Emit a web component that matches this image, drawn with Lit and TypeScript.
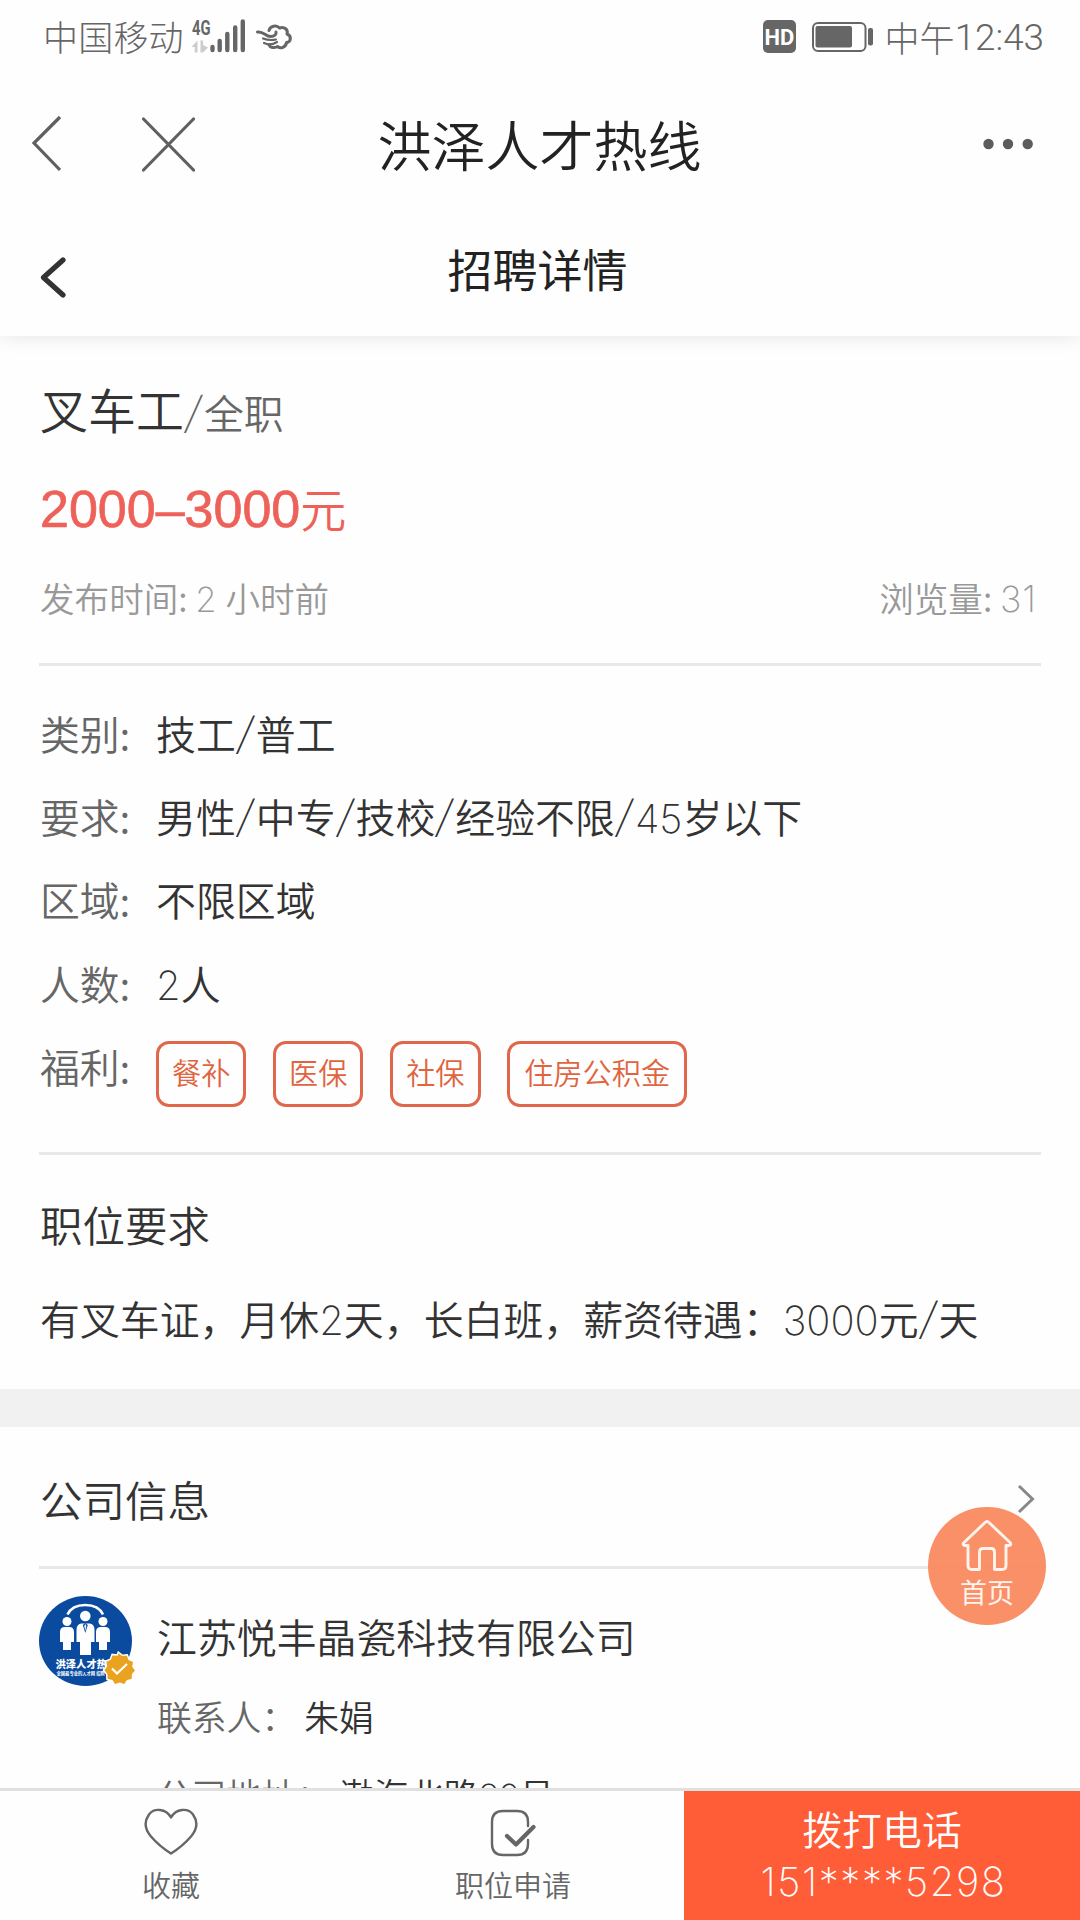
import { LitElement, html, css, svg } from "lit";
import { customElement } from "lit/decorators.js";

interface Field { label: string; value: unknown; }

const num = (t: string) => html`<span class="num">${t}</span>`;
const slash = html`<span class="slash">/</span>`;

const fields: Field[] = [
  { label: "类别:", value: html`技工${slash}普工` },
  { label: "要求:", value: html`男性${slash}中专${slash}技校${slash}经验不限${slash}${num("45")}岁以下` },
  { label: "区域:", value: "不限区域" },
  { label: "人数:", value: html`${num("2")}人` },
];
const benefits = ["餐补", "医保", "社保", "住房公积金"];
const signal = [[212.5, 46], [219.7, 40], [227.3, 33], [235.2, 26.5], [242.8, 20.5]];

@customElement("app-root")
export class AppRoot extends LitElement {
  static styles = css`
    :host { display: block; }
    * { box-sizing: border-box; }
    svg { display: block; flex: none; }
    .screen {
      width: 1080px; height: 1920px; overflow: hidden; position: relative;
      display: flex; flex-direction: column; background: #fefefe; color: #333;
      font-family: "Noto Sans CJK SC", sans-serif; font-weight: 350; font-size: 39.9px;
      white-space: nowrap;
    }
    .status { height: 70px; flex: none; display: flex; align-items: center; color: #666; font-size: 35px; line-height: 70px; font-weight: 300; padding: 0 36px 0 43px; }
    .status .carrier { width: 147px; letter-spacing: 0.2px; padding-top: 2px; }
    .status .spacer { flex: 1; }
    .status .time { display: flex; align-items: center; height: 70px; margin-left: 11px; padding-top: 3px; }
    .status .clock { font-family: Roboto, sans-serif; font-size: 36.8px; font-weight: 350; padding-top: 2px; }
    .titlebar { height: 146px; flex: none; display: flex; align-items: center; justify-content: space-between; background: #fefefe; position: relative; z-index: 1; }
    .titlebar .name { font-size: 54px; line-height: 80px; color: #222; padding: 2px 1px 0 0; }
    .subbar { position: relative; height: 120px; flex: none; display: flex; align-items: center; justify-content: space-between; box-shadow: 0 2px 18px rgba(0, 0, 0, 0.09); background: #fefefe; }
    .subbar .name { font-size: 45px; line-height: 70px; color: #222; padding: 0 5px 15px 0; font-weight: 370; }
    .side { width: 220px; }
    .main { flex: 1; min-height: 0; overflow: hidden; }
    .job { padding: 32px 39px 17px; }
    .job-title { height: 80px; line-height: 80px; font-size: 48px; padding-left: 1px; }
    .job-title .type { font-size: 39.8px; color: #666; }
    .salary { height: 122px; line-height: 123px; font-size: 52px; color: #ee6159; font-family: "Liberation Sans", sans-serif; padding-left: 1px; -webkit-text-stroke: 0.7px #ee6159; }
    .salary .unit { font-family: "Noto Sans CJK SC", sans-serif; font-size: 46px; line-height: 1; -webkit-text-stroke: 0; }
    .meta { height: 54px; line-height: 54px; font-size: 34.6px; color: #999; display: flex; justify-content: space-between; padding: 0 4px 0 1px; font-weight: 330; }
    .rule { height: 3px; background: #e8e8e8; }
    .meta + .rule { margin-top: 39px; }
    .fields { padding: 25px 1px 45px; }
    .field { display: flex; height: 83.2px; line-height: 83.2px; }
    .label { width: 116px; color: #666; letter-spacing: -0.2px; }
    .num { font-family: Inter, "Liberation Sans", sans-serif; font-weight: 200; line-height: 1; }
    .meta .num { letter-spacing: 1px; font-weight: 250; }
    .meta > :last-child .num { font-size: 36px; }
    .slash { display: inline-block; width: 20px; text-align: center; font-weight: 250; line-height: 1; transform: translateY(-3px) skewX(-6deg); }
    .tags { display: flex; gap: 26.7px; align-items: flex-end; }
    .tag { height: 66px; line-height: 54px; border: 3px solid #e0674c; border-radius: 13px; color: #e0653f; font-size: 29.2px; padding: 0 13px; }
    .tag:last-child { padding: 0 14px; }
    .h2 { font-size: 42.5px; line-height: 80px; padding-left: 1px; }
    .rule + .h2 { margin-top: 29px; }
    .desc { line-height: 108px; height: 108px; padding-left: 1px; font-size: 39.9px; }
    .band { height: 38px; background: #f1f1f1; }
    .company { padding: 0 39px; }
    .company-head { height: 142px; padding-top: 6px; border-bottom: 3px solid #e8e8e8; display: flex; align-items: center; justify-content: space-between; }
    .company-body { display: flex; padding-top: 27px; gap: 18px; }
    .company-name { line-height: 80px; height: 80px; }
    .row { display: flex; gap: 8px; font-size: 34.8px; height: 78.5px; line-height: 80px; }
    .row .key { color: #666; }
    .bottom { height: 132px; flex: none; display: flex; border-top: 3px solid #e0e0e0; background: #fefefe; position: relative; }
    .action { width: 342px; color: #666; font-size: 29px; display: flex; flex-direction: column; align-items: center; line-height: 44px; padding-top: 14px; }
    .action svg { margin-bottom: 5px; }
    .call { flex: 1; background: #ff5c38; color: #fff; text-align: center; padding-top: 8px; }
    .call .t { line-height: 58px; height: 58px; }
    .call .p { font-family: Inter, sans-serif; font-weight: 200; line-height: 50px; letter-spacing: 1.6px; padding-left: 3px; }
    .fab { position: absolute; left: 928px; top: 1507px; width: 118px; height: 118px; border-radius: 50%; background: rgba(249, 136, 92, 0.93); color: #fff3ed; display: flex; flex-direction: column; align-items: center; padding-top: 11px; font-size: 27px; line-height: 40px; font-weight: 400; }
  `;

  render() {
    return html`
      <div class="screen">
        <div class="status">
          <span class="carrier">中国移动</span>
          <svg width="110" height="70" viewBox="190 0 110 70" fill="#666">
            <text x="192" y="34.500" font-family="Roboto" font-weight="700" font-size="20.5" textLength="18.500" lengthAdjust="spacingAndGlyphs">4G</text>
            <path d="M191.500 47l6-6.500v12h-2.800v-5.500zM200.500 40.500h2.500v4.500l5 2.500-5 5h-2.500z" fill="#ccc" />
            ${signal.map(([x, y]) => svg`<path d="M${x} ${y + 1}V50" stroke="#666" stroke-width="4.4" stroke-linecap="round" />`)}
            <g fill="none" stroke="#666" stroke-width="3" stroke-linecap="round" stroke-linejoin="round">
              <path d="M257.500 32c6-1 8 4.500 13 4.500 4.500 0 6-2.500 5.500-4.500" />
              <path d="M263 38.500c4 1.500 8 2 13 1" stroke-width="2.200" />
              <path d="M264 43c4 2 9 1.500 13-1" stroke-width="2.200" />
              <path d="M269 30.500c1-4.500 7.500-6 10.500-2.500 5-2 9 2 7.500 6 5 2 4 8-.5 8.500-.5 5-6 6.500-9 4-3.500 2-7.500 1-8.500-1.500" />
            </g>
          </svg>
          <span class="spacer"></span>
          <svg width="112" height="70" viewBox="762 0 112 70">
            <rect x="763" y="20" width="33" height="33" rx="5" fill="#666" />
            <text x="779.5" y="44.5" text-anchor="middle" font-family="Roboto" font-weight="700" font-size="22" fill="#fff">HD</text>
            <rect x="813" y="23" width="52.500" height="28" rx="5" fill="none" stroke="#666" stroke-width="2" />
            <rect x="815.500" y="26" width="36.500" height="21.500" rx="2" fill="#666" />
            <rect x="868" y="28" width="5" height="17.500" rx="2" fill="#666" />
          </svg>
          <span class="time"><span>中午</span><span class="clock">12:43</span></span>
        </div>

        <div class="titlebar">
          <svg class="side" width="220" height="146" viewBox="0 70 220 146" fill="none" stroke="#606060" stroke-width="3.2">
            <path d="M60 117L34 143l26 27" />
            <path d="M143.500 119l50 51M193.500 119l-50 51" stroke-linecap="round" />
          </svg>
          <span class="name">洪泽人才热线</span>
          <svg class="side" width="220" height="146" viewBox="860 70 220 146" fill="#5c5c5c">
            <circle cx="988.500" cy="144" r="5.200" /><circle cx="1008" cy="144" r="5.200" /><circle cx="1027.700" cy="144" r="5.200" />
          </svg>
        </div>

        <div class="subbar">
          <svg class="side" width="220" height="120" viewBox="0 216 220 120" fill="none" stroke="#333" stroke-width="5.200" stroke-linecap="round" stroke-linejoin="round">
            <path d="M63 260L43.500 277.500l19.500 17.500" />
          </svg>
          <span class="name">招聘详情</span>
          <span class="side"></span>
        </div>

        <div class="main">
          <section class="job">
            <div class="job-title">叉车工<span class="type">${slash}全职</span></div>
            <div class="salary">2000–3000<span class="unit">元</span></div>
            <div class="meta"><span>发布时间: ${num("2")} 小时前</span><span>浏览量: ${num("31")}</span></div>
            <div class="rule"></div>
            <div class="fields">
              ${fields.map((f) => html`<div class="field"><span class="label">${f.label}</span><span>${f.value}</span></div>`)}
              <div class="field">
                <span class="label">福利:</span>
                <div class="tags">${benefits.map((b) => html`<span class="tag">${b}</span>`)}</div>
              </div>
            </div>
            <div class="rule"></div>
            <div class="h2">职位要求</div>
            <div class="desc">有叉车证，月休${num("2")}天，长白班，薪资待遇：${num("3000")}元${slash}天</div>
          </section>
          <div class="band"></div>
          <section class="company">
            <div class="company-head">
              <span class="h2">公司信息</span>
              <svg width="26" height="34" viewBox="1015.500 1483 26 34" fill="none" stroke="#888" stroke-width="3"><path d="M1019.500 1487l13.500 13-13.500 13" /></svg>
            </div>
            <div class="company-body">
              <svg width="100" height="92" viewBox="39 1596 100 92">
                <ellipse cx="85.500" cy="1641" rx="46.500" ry="45" fill="#0a4ba0" />
                <path d="M67.500 1614.500Q72 1605 85.300 1605T103 1614.500" fill="none" stroke="#fff" stroke-width="2.600" />
                <g fill="#fff">
                  <circle cx="67" cy="1621.500" r="4.500" /><circle cx="103" cy="1621.500" r="4.500" /><circle cx="85.300" cy="1616" r="5.300" />
                  <path d="M60 1632q0-5 5-5h4q5 0 5 5v10h-3v8h-8v-8h-3zM96 1632q0-5 5-5h4q5 0 5 5v10h-3v8h-8v-8h-3zM76.500 1630q0-6 5-6.500h8q5 .5 5 6.500v12h-3.500v13h-11v-13h-3.500z" />
                  <text x="55.500" y="1668" font-size="10.300" font-weight="900">洪泽人才热</text>
                  <text x="56.500" y="1675" font-size="4.300" font-weight="700">全国最专业的人才网 招聘</text>
                </g>
                <path d="M85.300 1623l-2.500 2 2.500 8 2.500-8z" fill="#0a4ba0" />
                <path d="M85.300 1624l-1 2 1 5 1-5z" fill="#fff" />
                <path d="M120.300 1654.500l4 3.300 5-.6 1.800 4.800 4.700 2-.8 5 3 4-3.400 3.700-.2 5.200-5 1.300-2.800 4.300-4.900-1.600-5 1.600-2.700-4.300-5-1.300-.3-5.200-3.300-4 3-4-.8-5 4.700-2 1.800-4.800 5 .6z" transform="translate(-2 -2.500)" fill="#e9a321" stroke="#fff" stroke-width="1.500" />
                <path d="M112 1668.500l5 5 10-9.500" fill="none" stroke="#fff" stroke-width="2.200" />
              </svg>
              <div>
                <div class="company-name">江苏悦丰晶瓷科技有限公司</div>
                <div class="row"><span class="key">联系人：</span><span>朱娟</span></div>
                <div class="row"><span class="key">公司地址：</span><span>渤海北路${num("89")}号</span></div>
              </div>
            </div>
          </section>
        </div>

        <div class="bottom">
          <div class="action">
            <svg width="60" height="52" viewBox="141 1804.500 60 52" fill="none" stroke="#666" stroke-width="2.400" stroke-linejoin="round">
              <path d="M171 1817C166 1808 154 1807 149 1814C144 1821 145 1829 151 1836C157 1843 163 1848 171 1853C179 1848 185 1843 191 1836C197 1829 198 1821 193 1814C188 1807 176 1808 171 1817Z" />
            </svg>
            <span>收藏</span>
          </div>
          <div class="action">
            <svg width="60" height="52" viewBox="483 1805 60 52" fill="none" stroke="#666" stroke-width="2.400" stroke-linecap="round">
              <path d="M528 1826V1822Q528 1811 517 1811H503Q492 1811 492 1822V1844Q492 1855 503 1855H517Q528 1855 528 1844V1840" />
              <path d="M507 1836l9 8.500 17.500-17.500" stroke-width="4.200" stroke-linejoin="round" />
            </svg>
            <span>职位申请</span>
          </div>
          <div class="call"><div class="t">拨打电话</div><div class="p">151****5298</div></div>
        </div>

        <div class="fab">
          <svg width="56" height="54" viewBox="960 1518 56 54" fill="none" stroke="#fff3ed" stroke-width="2.900" stroke-linejoin="round" stroke-linecap="round">
            <path d="M986 1522.500q2-2 4 0L1011.500 1543q1 2.500-1.500 2.500H1007V1565.500q0 4-4 4H995.500V1552q0-3.500-3.500-3.500H984q-3.500 0-3.500 3.500V1569.500H973q-4 0-4-4V1545.500H966q-2.500 0-1.500-2.500z" />
          </svg>
          <span>首页</span>
        </div>
      </div>
    `;
  }
}
